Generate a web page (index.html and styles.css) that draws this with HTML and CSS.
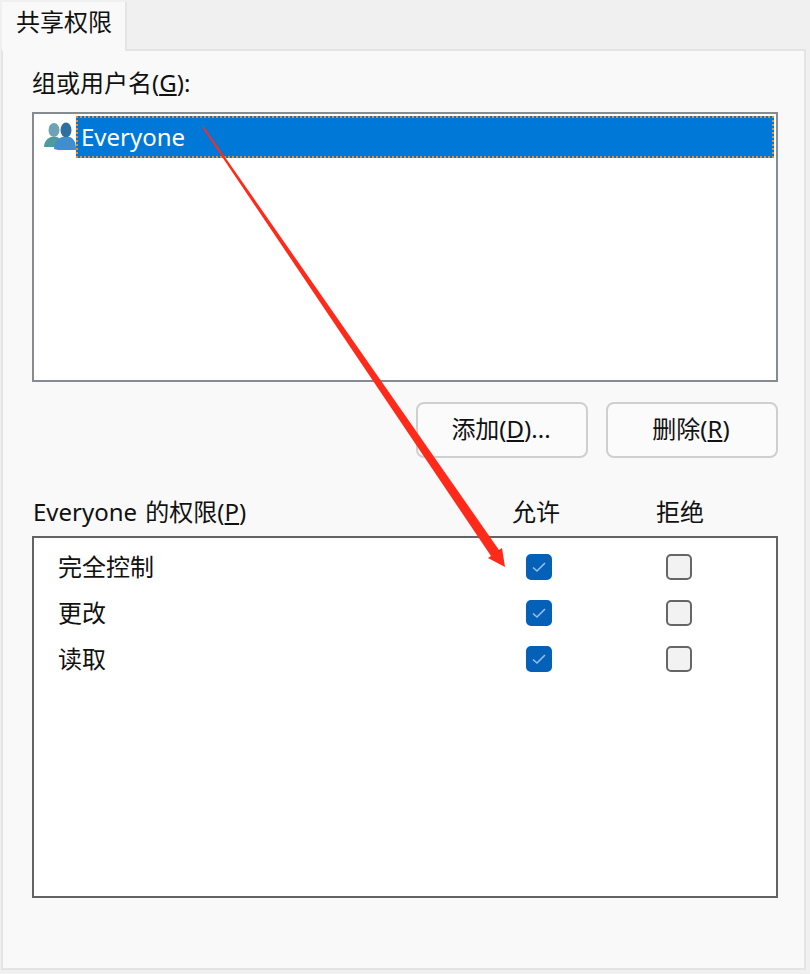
FILE: index.html
```html
<!DOCTYPE html>
<html lang="zh-CN">
<head>
    <meta charset="UTF-8">
    <title>共享权限</title>
    <link rel="stylesheet" href="styles.css">
</head>
<body>

    <div class="tabs">
        <div class="tab">共享权限</div>
    </div>

    <div class="panel">
        <div class="group-label">组或用户名(<u>G</u>):</div>

        <div class="user-list">
            <div class="user-row">
                <svg class="user-icon" width="32" height="30" viewBox="0 0 32 30">
                    <ellipse cx="10" cy="8" rx="5.5" ry="7" fill="#6fa3b3"/>
                    <path d="M0 25 C0 19 4 16 7 15 L13 15 C16 16 19 19 19 25 Z" fill="#4f9a9c"/>
                    <ellipse cx="22" cy="8" rx="5.5" ry="7.5" fill="#2f6f9f"/>
                    <path d="M10 27 C10 20 14 17 18 15 L26 15 C30 17 32 20 32 28 L14 28 Z" fill="#3f8fd0"/>
                </svg>
                <div class="user-name">Everyone</div>
            </div>
        </div>

        <div class="list-buttons">
            <button>添加(<u>D</u>)...</button>
            <button>删除(<u>R</u>)</button>
        </div>

        <div class="perm-head">
            <div class="perm-title">Everyone 的权限(<u>P</u>)</div>
            <div class="perm-col">允许</div>
            <div class="perm-col">拒绝</div>
        </div>

        <div class="perm-box">
            <div class="perm-row">
                <span>完全控制</span>
                <span class="check on"><svg width="16" height="12" viewBox="0 0 16 12"><path d="M2 6.5 L6 10 L14 2" fill="none" stroke="#94c0ea" stroke-width="1.6"/></svg></span>
                <span class="check"></span>
            </div>
            <div class="perm-row">
                <span>更改</span>
                <span class="check on"><svg width="16" height="12" viewBox="0 0 16 12"><path d="M2 6.5 L6 10 L14 2" fill="none" stroke="#94c0ea" stroke-width="1.6"/></svg></span>
                <span class="check"></span>
            </div>
            <div class="perm-row">
                <span>读取</span>
                <span class="check on"><svg width="16" height="12" viewBox="0 0 16 12"><path d="M2 6.5 L6 10 L14 2" fill="none" stroke="#94c0ea" stroke-width="1.6"/></svg></span>
                <span class="check"></span>
            </div>
        </div>
    </div>

    <!-- red annotation arrow drawn over the dialog -->
    <svg class="arrow" width="810" height="974" viewBox="0 0 810 974">
        <polygon points="202,127 204,127 499,550 502,548 505,567 488,558 491,556" fill="#ff2a1a"/>
    </svg>

</body>
</html>
```

FILE: styles.css
```css
body {
    margin: 0;
    height: 974px;
    overflow: hidden;
    position: relative;
    background-color: #f0f0f0;
    font-family: "Noto Sans", "Noto Sans CJK SC", sans-serif;
    font-size: 24px;
    color: #111;
}

.tabs {
    height: 49px;
    padding: 2px 0 0 2px;
    box-sizing: border-box;
}

.tab {
    width: 125px;
    height: 49px;
    box-sizing: border-box;
    padding-left: 14px;
    line-height: 39px;
    background-color: #f9f9f9;
    border-right: 2px solid #e4e4e4;
    position: relative;
}

.panel {
    width: 805px;
    height: 921px;
    margin-left: 1px;
    padding: 0 0 0 29px;
    box-sizing: border-box;
    background-color: #f9f9f9;
    border: 2px solid #e4e4e4;
}

.group-label {
    height: 61px;
    line-height: 64px;
}

.user-list {
    width: 746px;
    height: 270px;
    box-sizing: border-box;
    padding: 2px 2px 0 10px;
    background-color: #fff;
    border: 2px solid #868a91;
}

.user-row {
    display: flex;
    align-items: flex-start;
}

.user-icon {
    flex: none;
    margin-top: 6px;
}

/* focus rectangle: square 2px dots, plain dotted comes out too soft */
.user-name {
    flex: 1;
    height: 42px;
    box-sizing: border-box;
    padding: 2px 0 0 5px;
    line-height: 38px;
    color: #fff;
    background-color: #0078d7;
    background-image:
        repeating-linear-gradient(90deg, #f08a24 0 2px, transparent 2px 4px),
        repeating-linear-gradient(90deg, #f08a24 0 2px, transparent 2px 4px),
        repeating-linear-gradient(0deg, #f08a24 0 2px, transparent 2px 4px),
        repeating-linear-gradient(0deg, #f08a24 0 2px, transparent 2px 4px);
    background-size: 100% 2px, 100% 2px, 2px 100%, 2px 100%;
    background-position: top left, bottom left, top left, top right;
    background-repeat: no-repeat;
}

.list-buttons {
    width: 746px;
    display: flex;
    justify-content: flex-end;
    gap: 18px;
    margin-top: 20px;
}

button {
    width: 172px;
    height: 56px;
    padding: 0 2px 5px 0;
    font: inherit;
    color: #111;
    background-color: #fbfbfb;
    border: 2px solid #cfcfcf;
    border-radius: 8px;
}

.perm-head {
    width: 746px;
    height: 78px;
    display: flex;
    align-items: flex-end;
    line-height: 48px;
}

.perm-title {
    flex: none;
    width: 480px;
    padding-left: 1px;
    box-sizing: border-box;
    word-spacing: 2px;
}

.perm-col {
    flex: none;
    width: 144px;
}

.perm-box {
    width: 746px;
    height: 362px;
    box-sizing: border-box;
    padding: 6px 0 0 24px;
    background-color: #fff;
    border: 2px solid #636363;
}

.perm-row {
    height: 46px;
    display: grid;
    grid-template-columns: 468px 140px 26px;
    align-items: center;
    line-height: 42px;
}

.check {
    width: 26px;
    height: 26px;
    box-sizing: border-box;
    display: flex;
    align-items: center;
    justify-content: center;
    background-color: #f2f2f2;
    border: 2px solid #666;
    border-radius: 5px;
}

.check.on {
    background-color: #0560b8;
    border-color: #0560b8;
}

.arrow {
    position: absolute;
    top: 0;
    left: 0;
    pointer-events: none;
}
```
